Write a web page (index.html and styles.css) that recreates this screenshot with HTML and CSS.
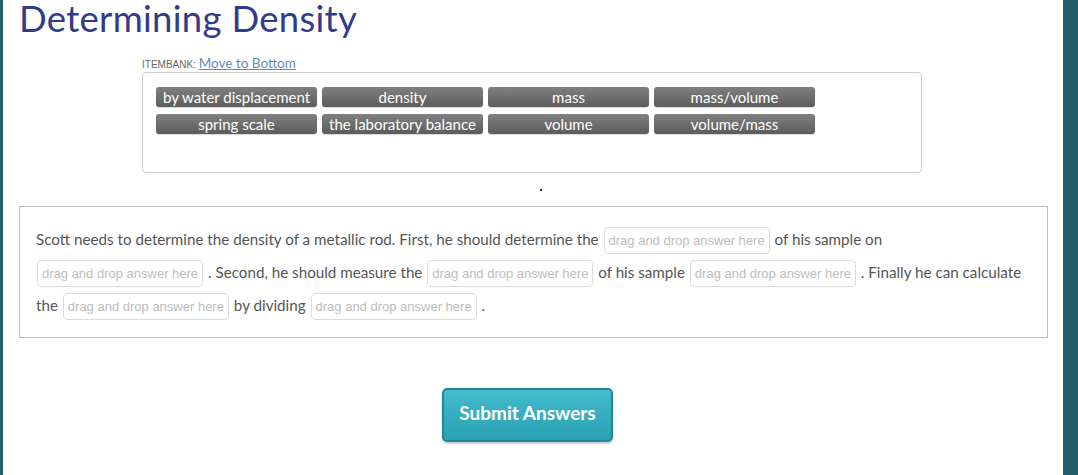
FILE: index.html
```html
<!DOCTYPE html>
<html>
<head>
<meta charset="utf-8">
<link rel="stylesheet" href="styles.css">
</head>
<body>
<div class="frame">
  <main class="content">
    <h1 class="title">Determining Density</h1>
    <section class="bank">
      <div class="bank-label">ITEMBANK: <a href="#" class="bank-link">Move to Bottom</a></div>
      <div class="bank-box">
        <div class="tile">by water displacement</div>
        <div class="tile">density</div>
        <div class="tile">mass</div>
        <div class="tile">mass/volume</div>
        <div class="tile">spring scale</div>
        <div class="tile">the laboratory balance</div>
        <div class="tile">volume</div>
        <div class="tile">volume/mass</div>
      </div>
      <div class="dot-row"><span class="dot"></span></div>
    </section>
    <section class="question">
      <p class="question-text">Scott needs to determine the density of a metallic rod. First, he should determine the <span class="drop">drag and drop answer here</span> of his sample on <span class="drop">drag and drop answer here</span> . Second, he should measure the <span class="drop">drag and drop answer here</span> of his sample <span class="drop">drag and drop answer here</span> . Finally he can calculate the <span class="drop">drag and drop answer here</span> by dividing <span class="drop">drag and drop answer here</span> .</p>
    </section>
    <div class="actions">
      <button class="submit">Submit Answers</button>
    </div>
  </main>
  <aside class="rail"></aside>
</div>
</body>
</html>
```

FILE: styles.css
```css
html, body {
  margin: 0;
  padding: 0;
  background: #ffffff;
  height: 100%;
  overflow: hidden;
}

.frame {
  display: flex;
  height: 475px;
  border-left: 3px solid #255f6b;
}

.content {
  flex: 1;
  background: #fff;
  font-family: "Lato", "Noto Sans", sans-serif;
  min-width: 0;
}

.rail {
  width: 15px;
  background: #255f6b;
}

.title {
  margin: 0 0 0 16px;
  font-family: "Lato", sans-serif;
  font-weight: 400;
  font-size: 36.5px;
  line-height: 36px;
  color: #313b8a;
  letter-spacing: 0.3px;
}

.bank {
  margin: 20px 0 0 139px;
  width: 780px;
}

.bank-label {
  font-family: "Liberation Sans", sans-serif;
  font-size: 10px;
  color: #666;
  line-height: 14px;
  height: 14px;
}

.bank-link {
  font-family: "Lato", sans-serif;
  font-size: 13.5px;
  color: #5e8fbf;
  text-decoration: underline;
}

.bank-box {
  margin-top: 2px;
  border: 1px solid #cfcfcf;
  border-radius: 4px;
  padding: 14px 0 0 13px;
  box-sizing: border-box;
  height: 101px;
  display: grid;
  grid-template-columns: repeat(4, 161px);
  grid-auto-rows: 20px;
  column-gap: 5px;
  row-gap: 7px;
  align-content: start;
}

.tile {
  background: linear-gradient(#808080, #5c5c5c);
  border-radius: 3px;
  color: #fff;
  font-family: "Lato", sans-serif;
  font-size: 15px;
  line-height: 20px;
  text-align: center;
  white-space: nowrap;
  box-shadow: 0 1px 1px rgba(0,0,0,0.15);
}

.dot-row {
  height: 33px;
  display: flex;
  justify-content: center;
  align-items: center;
  padding-left: 17px;
  padding-top: 1px;
  box-sizing: border-box;
}

.dot {
  width: 2px;
  height: 2px;
  background: #1d2a6e;
  display: block;
}

.question {
  margin: 0 15px 0 16px;
  border: 1px solid #bdbdbd;
  padding: 16px 16px 15px 16px;
}

.question-text {
  margin: 0;
  font-family: "Lato", sans-serif;
  font-size: 15.2px;
  line-height: 33px;
  color: #555;
}

.drop {
  display: inline-block;
  vertical-align: middle;
  height: 27px;
  box-sizing: border-box;
  border: 1px solid #dcdcdc;
  border-radius: 4px;
  padding: 0 4px;
  margin: -2px 1px 0;
  font-family: "Liberation Sans", Arial, sans-serif;
  font-size: 13px;
  line-height: 25px;
  color: #bdbdbd;
}

.actions {
  padding: 50px 0 0 439px;
}

.submit {
  width: 171px;
  height: 54px;
  border: 2px solid #1f8797;
  border-radius: 5px;
  background: linear-gradient(#44bccd, #2aa0b3);
  color: #fff;
  font-family: "Lato", sans-serif;
  font-weight: 700;
  font-size: 19px;
  padding: 0 0 5px;
  box-shadow: 0 2px 2px rgba(0,0,0,0.2);
  cursor: pointer;
}
```
